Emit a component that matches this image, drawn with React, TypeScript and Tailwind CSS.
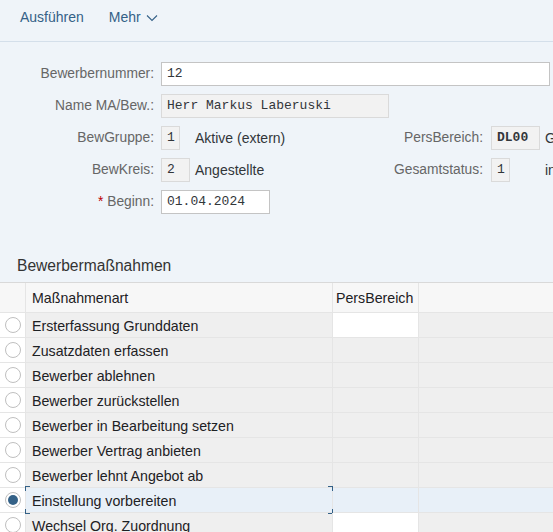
import React from 'react';

const rows = [
  { text: 'Ersterfassung Grunddaten', editable: true },
  { text: 'Zusatzdaten erfassen' },
  { text: 'Bewerber ablehnen' },
  { text: 'Bewerber zurückstellen' },
  { text: 'Bewerber in Bearbeitung setzen' },
  { text: 'Bewerber Vertrag anbieten' },
  { text: 'Bewerber lehnt Angebot ab' },
  { text: 'Einstellung vorbereiten', selected: true },
  { text: 'Wechsel Org. Zuordnung', editable: true },
];

const label = 'w-[161px] shrink-0 text-right text-[13.8px] text-[#666666] pr-[7px]';
const mono = "font-['Liberation_Mono',monospace] text-[13px] text-[#32363a]";
const readonlyBox = 'h-[24px] flex items-center px-[5px] bg-[#f2f2f2] border border-[#dadada] ' + mono;

function Radio({ checked }: { checked?: boolean }) {
  return (
    <div className="w-[16px] h-[16px] rounded-full border border-[#bfbfbf] bg-white flex items-center justify-center">
      {checked && <div className="w-[10px] h-[10px] rounded-full bg-[#346187]" />}
    </div>
  );
}

export default function App() {
  return (
    <div className="w-[553px] h-[532px] overflow-hidden bg-[#eff4f9] font-['Liberation_Sans',Arial,sans-serif]">
      <div className="h-[42px] flex items-center gap-[25px] px-[20px] border-b border-[#d4dfea] text-[14px] text-[#346187] pb-[6px]">
        <span>Ausführen</span>
        <span className="flex items-center gap-[5px]">
          Mehr
          <svg width="12" height="8" viewBox="0 0 12 8" fill="none" stroke="#346187" strokeWidth="1.1">
            <path d="M1 1.5 L6 6.5 L11 1.5" />
          </svg>
        </span>
      </div>

      <div className="pt-[20px] flex flex-col gap-[8px]">
        <div className="flex items-center h-[24px]">
          <div className={label}>Bewerbernummer:</div>
          <div className={'h-[24px] w-[389px] shrink-0 flex items-center px-[5px] bg-white border border-[#c4c4c4] ' + mono}>12</div>
        </div>
        <div className="flex items-center h-[24px]">
          <div className={label}>Name MA/Bew.:</div>
          <div className={readonlyBox + ' w-[228px] shrink-0'}>Herr Markus Laberuski</div>
        </div>
        <div className="flex items-center h-[24px]">
          <div className={label}>BewGruppe:</div>
          <div className="w-[34px] shrink-0"><div className={readonlyBox + ' w-[19px]'}>1</div></div>
          <div className="w-[142px] shrink-0 text-[14px] text-[#32363a]">Aktive (extern)</div>
          <div className="w-[154px] shrink-0 text-right text-[13.8px] text-[#666666] pr-[8px]">PersBereich:</div>
          <div className="w-[54px] shrink-0"><div className={readonlyBox + ' w-[49px] font-bold'}>DL00</div></div>
          <div className="whitespace-nowrap text-[14px] text-[#32363a]">Geschäftsbereich</div>
        </div>
        <div className="flex items-center h-[24px]">
          <div className={label}>BewKreis:</div>
          <div className="w-[34px] shrink-0"><div className={readonlyBox + ' w-[29px]'}>2</div></div>
          <div className="w-[142px] shrink-0 text-[14px] text-[#32363a]">Angestellte</div>
          <div className="w-[154px] shrink-0 text-right text-[13.8px] text-[#666666] pr-[8px]">Gesamtstatus:</div>
          <div className="w-[54px] shrink-0"><div className={readonlyBox + ' w-[19px]'}>1</div></div>
          <div className="whitespace-nowrap text-[14px] text-[#32363a]">in Bearbeitung</div>
        </div>
        <div className="flex items-center h-[24px]">
          <div className={label}><span className="text-[#bb0000]">*</span> Beginn:</div>
          <div className={'h-[24px] w-[109px] shrink-0 flex items-center px-[5px] bg-white border border-[#c4c4c4] ' + mono}>01.04.2024</div>
        </div>
      </div>

      <div className="mt-[36px] h-[32px] flex items-center px-[17px] text-[15.6px] text-[#333333]">Bewerbermaßnahmen</div>

      <div className="border-t border-[#d9d9d9] text-[14.2px] text-[#1d2124]">
        <div className="flex h-[30px] bg-[#f7f7f7] border-b border-[#e5e5e5]">
          <div className="w-[26px] shrink-0 border-r border-[#e5e5e5]" />
          <div className="w-[307px] shrink-0 pl-[6px] pt-[2px] flex items-center border-r border-[#e5e5e5]">Maßnahmenart</div>
          <div className="w-[86px] shrink-0 pl-[3px] pt-[2px] flex items-center border-r border-[#e5e5e5]">PersBereich</div>
          <div className="flex-1" />
        </div>
        {rows.map((r) => (
          <div
            key={r.text}
            className={
              'flex h-[25px] border-b border-[#e5e5e5] ' + (r.selected ? 'bg-[#e8f0f8]' : 'bg-[#efefef]')
            }
          >
            <div className="w-[26px] shrink-0 bg-white flex items-center justify-center border-r border-[#e5e5e5]">
              <Radio checked={r.selected} />
            </div>
            <div className="relative w-[307px] shrink-0 pl-[6px] pt-[3px] flex items-center border-r border-[#e5e5e5]">
              {r.selected && (
                <>
                  <div className="absolute left-[-1px] top-[-2px] w-[5px] h-[5px] border-l border-t border-[#346187]" />
                  <div className="absolute left-[-1px] bottom-[-2px] w-[5px] h-[5px] border-l border-b border-[#346187]" />
                  <div className="absolute right-[-1px] top-[-2px] w-[5px] h-[5px] border-r border-t border-[#346187]" />
                  <div className="absolute right-[-1px] bottom-[-2px] w-[5px] h-[5px] border-r border-b border-[#346187]" />
                </>
              )}
              {r.text}
            </div>
            <div className={'w-[86px] shrink-0 border-r border-[#e5e5e5] ' + (r.editable ? 'bg-white' : '')} />
            <div className="flex-1" />
          </div>
        ))}
      </div>
    </div>
  );
}
